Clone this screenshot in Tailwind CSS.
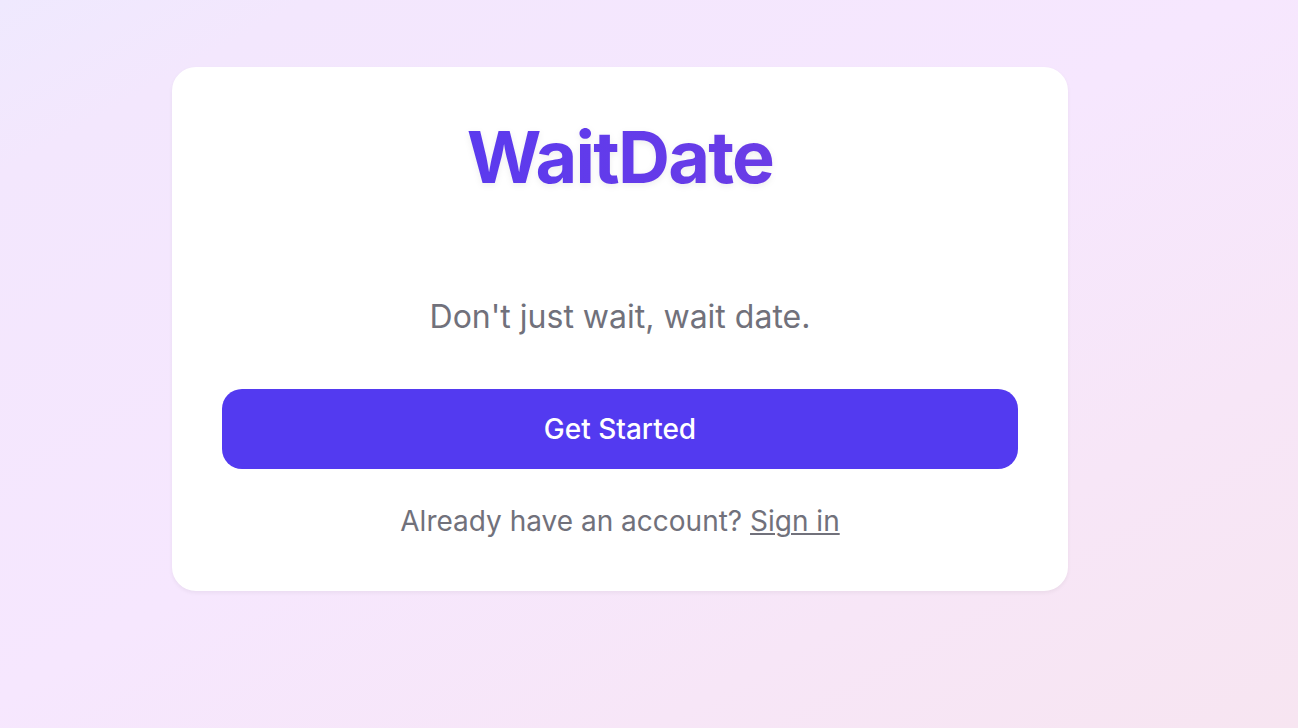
<!DOCTYPE html>
<html lang="en">
<head>
    <meta charset="UTF-8">
    <meta name="viewport" content="width=device-width, initial-scale=1.0">
    <title>WaitDate</title>
    <script src="https://cdn.jsdelivr.net/npm/@tailwindcss/browser@4"></script>
</head>
<body class="min-h-screen bg-[linear-gradient(to_bottom_right,#efe9fe_0%,#f3e7fd_12%,#f6e7fe_48%,#f7e6f7_75%,#f7e5f1_100%)] pt-[67px] pr-[58px] pb-12 font-['Inter',sans-serif]">
    <main class="mx-auto flex w-full max-w-4xl flex-col rounded-3xl border-2 border-white bg-white p-12 text-center shadow-[0_2px_4px_rgb(0_0_0/0.05)]">
        <h1 class="mb-24 text-7xl font-bold tracking-tight leading-20"><span class="bg-linear-to-r from-[#5b3aee] to-[#6a3ce6] bg-clip-text text-transparent drop-shadow-[0_2px_3px_rgb(0_0_0/0.07)]">WaitDate</span></h1>
        <p class="mb-12 text-[32px] leading-12 text-[#71717b]">Don't just wait, wait date.</p>
        <button type="button" class="mb-8 h-20 w-full rounded-[20px] bg-[#533af0] text-[28px] font-medium text-white">Get Started</button>
        <p class="text-[28px] leading-10 text-[#71717b]">Already have an account? <a href="#" class="underline decoration-2 underline-offset-2">Sign in</a></p>
    </main>
</body>
</html>
